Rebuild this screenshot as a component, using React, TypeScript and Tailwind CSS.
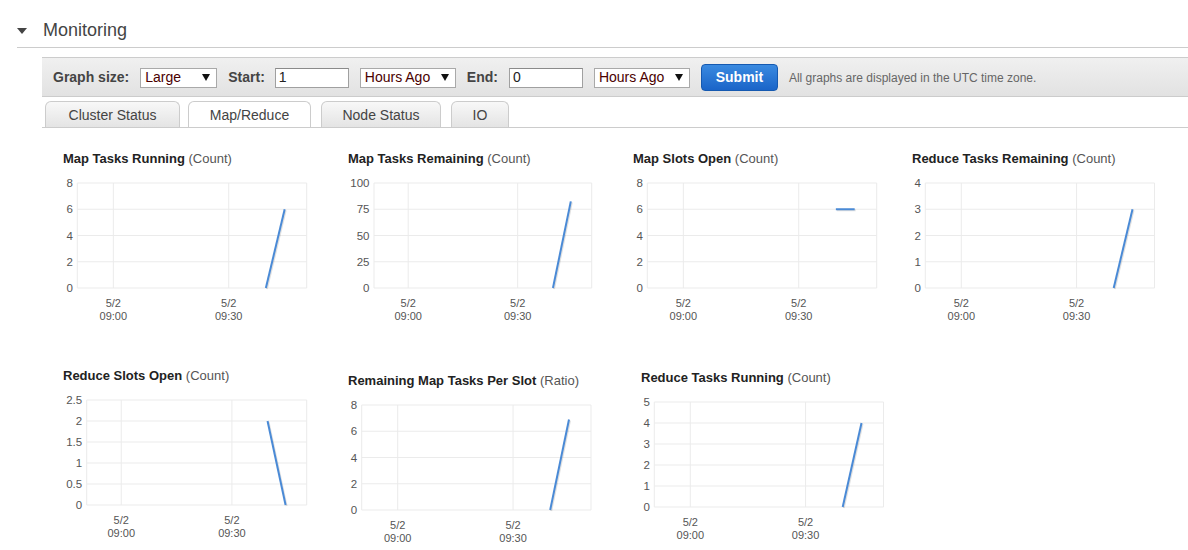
import React from "react";

type ChartSpec = {
  title: string;
  unit: string;
  ticks: number[];
  from: number;
  to: number;
  left: number;
  right: number;
  cell: string;
};

const PLOT_H = 105;
const TOP = 8;
const X0 = 0.822;
const X1 = 0.904;

const row1: ChartSpec[] = [
  { title: "Map Tasks Running", unit: "Count", ticks: [0, 2, 4, 6, 8], from: 0, to: 6, left: 14.3, right: 243.7, cell: "w-[285px]" },
  { title: "Map Tasks Remaining", unit: "Count", ticks: [0, 25, 50, 75, 100], from: 0, to: 82.5, left: 26, right: 243.7, cell: "w-[285px]" },
  { title: "Map Slots Open", unit: "Count", ticks: [0, 2, 4, 6, 8], from: 6, to: 6, left: 14.3, right: 243.7, cell: "w-[279px]" },
  { title: "Reduce Tasks Remaining", unit: "Count", ticks: [0, 1, 2, 3, 4], from: 0, to: 3, left: 13.3, right: 242.5, cell: "flex-1" },
];

const row2: ChartSpec[] = [
  { title: "Reduce Slots Open", unit: "Count", ticks: [0, 0.5, 1, 1.5, 2, 2.5], from: 2, to: 0, left: 23.7, right: 243.7, cell: "w-[285px]" },
  { title: "Remaining Map Tasks Per Slot", unit: "Ratio", ticks: [0, 2, 4, 6, 8], from: 0, to: 6.9, left: 13.7, right: 243, cell: "w-[293px] mt-[5px]" },
  { title: "Reduce Tasks Running", unit: "Count", ticks: [0, 1, 2, 3, 4, 5], from: 0, to: 4, left: 13.3, right: 242.5, cell: "flex-1 mt-[2px]" },
];

function Chart({ spec }: { spec: ChartSpec }) {
  const { ticks, left, right } = spec;
  const max = ticks[ticks.length - 1];
  const w = right - left;
  const bottom = TOP + PLOT_H;
  const y = (v: number) => bottom - (v / max) * PLOT_H;
  const xs = [left + w * 0.157, left + w * 0.66];
  const px0 = left + w * X0;
  const px1 = left + w * X1;
  const d = `M${px0} ${y(spec.from)} L${px1} ${y(spec.to)}`;

  return (
    <div className={spec.cell}>
      <div className="h-4 text-[13px] leading-4 whitespace-nowrap">
        <span className="font-bold text-[#222]">{spec.title}</span>{" "}
        <span className="text-[#555]">({spec.unit})</span>
      </div>
      <svg width="260" height="150" className="mt-2 block overflow-visible">
        {ticks.map((t) => (
          <g key={t}>
            <line x1={left} x2={right} y1={y(t)} y2={y(t)} stroke="#ebebeb" strokeWidth="1" />
            <text x={left - 4.5} y={y(t) + 4} textAnchor="end" fontSize="11.5" fill="#555">
              {t}
            </text>
          </g>
        ))}
        <line x1={left} x2={left} y1={TOP} y2={bottom} stroke="#ebebeb" />
        <line x1={right} x2={right} y1={TOP} y2={bottom} stroke="#ebebeb" />
        {xs.map((x, i) => (
          <g key={i}>
            <line x1={x} x2={x} y1={TOP} y2={bottom} stroke="#ebebeb" />
            <text x={x} y={bottom + 18.5} textAnchor="middle" fontSize="11" fill="#555">
              5/2
            </text>
            <text x={x} y={bottom + 32} textAnchor="middle" fontSize="11" fill="#555">
              {i === 0 ? "09:00" : "09:30"}
            </text>
          </g>
        ))}
        <path d={d} transform="translate(1 1)" stroke="#000" strokeOpacity="0.12" strokeWidth="2" fill="none" />
        <path d={d} stroke="#4a8ad6" strokeWidth="2" fill="none" />
      </svg>
    </div>
  );
}

function Select({ value, w }: { value: string; w: string }) {
  return (
    <div className={`${w} flex h-5 items-center justify-between border border-[#a9a9a9] bg-white pl-[4px] pr-[6px] text-[14px] text-[#4a0000]`}>
      <span>{value}</span>
      <svg width="8" height="7" viewBox="0 0 8 7">
        <path d="M0 0 H8 L4 7 Z" fill="#111" />
      </svg>
    </div>
  );
}

function Field({ value, w }: { value: string; w: string }) {
  return (
    <div className={`${w} flex h-5 items-center border border-[#a0a0a0] border-t-[#8a8a8a] bg-white pl-[3px] text-[14px] text-[#222]`}>
      {value}
    </div>
  );
}

const tabs = [
  { label: "Cluster Status", w: "w-[135px]" },
  { label: "Map/Reduce", w: "w-[123px] ml-[8px]", active: true },
  { label: "Node Status", w: "w-[120px] ml-[10px]" },
  { label: "IO", w: "w-[58px] ml-[10px]" },
];

export default function App() {
  return (
    <div className="min-h-[550px] bg-white font-['Liberation_Sans',Arial,sans-serif]">
      <div className="ml-[17px] flex h-12 items-center border-b border-[#cccccc] pt-[13px]">
        <svg width="10" height="6" viewBox="0 0 10 6" className="mt-[2px]">
          <path d="M0 0 H10 L5 6 Z" fill="#444" />
        </svg>
        <span className="ml-4 text-[18px] text-[#444]">Monitoring</span>
      </div>

      <div className="ml-[42px]">
        <div className="mt-[9px] flex h-10 items-center gap-[11px] border-y border-[#cccccc] bg-gradient-to-b from-[#f0f0f0] to-[#e2e2e2] pl-[11px] pt-[1px]">
          <span className="text-[14px] font-bold text-[#444]">Graph size:</span>
          <Select value="Large" w="w-[77px]" />
          <span className="-mr-[1px] text-[14px] font-bold text-[#444]">Start:</span>
          <Field value="1" w="w-[74px]" />
          <Select value="Hours Ago" w="w-[96px]" />
          <span className="text-[14px] font-bold text-[#444]">End:</span>
          <Field value="0" w="w-[74px]" />
          <Select value="Hours Ago" w="w-[96px]" />
          <button className="h-[27px] w-[77px] rounded-[4px] border border-[#1559b0] bg-gradient-to-b from-[#3a8ae0] to-[#1a64c8] text-[14px] font-bold text-white">
            Submit
          </button>
          <span className="text-[12px] text-[#666]">All graphs are displayed in the UTC time zone.</span>
        </div>

        <div className="mt-1 flex items-end border-b border-[#cccccc] pl-[3px]">
          {tabs.map((t) => (
            <div
              key={t.label}
              className={`${t.w} flex h-[26px] items-center justify-center rounded-t-[6px] border border-b-0 border-[#cccccc] pt-[2px] text-[14px] text-[#444] ${
                t.active ? "bg-white" : "bg-gradient-to-b from-[#f8f8f8] to-[#e4e4e4]"
              }`}
            >
              {t.label}
            </div>
          ))}
        </div>

        <div className="pl-[21px]">
          <div className="mt-[23px] flex items-start">
            {row1.map((s) => (
              <Chart key={s.title} spec={s} />
            ))}
          </div>
          <div className="mt-[43px] flex items-start">
            {row2.map((s) => (
              <Chart key={s.title} spec={s} />
            ))}
          </div>
        </div>
      </div>
    </div>
  );
}
